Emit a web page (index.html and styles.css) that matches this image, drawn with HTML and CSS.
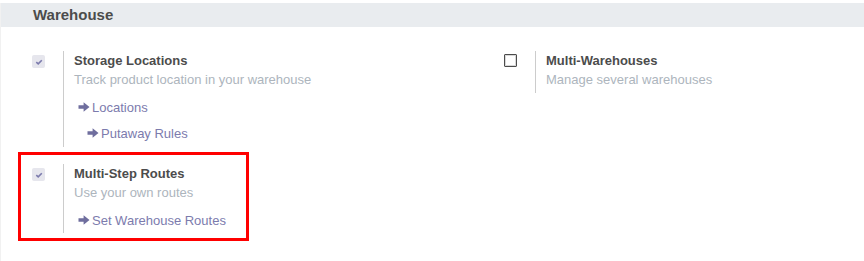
FILE: index.html
```html
<!DOCTYPE html>
<html lang="en">
<head>
    <meta charset="UTF-8">
    <meta name="viewport" content="width=device-width, initial-scale=1.0">
    <title>Inventory Settings</title>
    <link rel="stylesheet" href="styles.css">
</head>
<body>
    <div class="page">
        <h2 class="section-title">Warehouse</h2>
        <div class="settings-grid">
            <div class="setting-box">
                <div class="left-pane">
                    <span class="check checked">
                        <svg viewBox="0 0 8 8" width="8" height="8"><path d="M1.3 4.2 L3.2 5.9 L6.8 2.2" fill="none" stroke="#7c7bad" stroke-width="1.6"/></svg>
                    </span>
                </div>
                <div class="right-pane">
                    <div class="label">Storage Locations</div>
                    <div class="help">Track product location in your warehouse</div>
                    <a class="link first">
                        <svg class="arrow" viewBox="0 0 12 10" width="12" height="10"><path d="M0.5 3.2 H5.6 V0.2 L11.5 5 L5.6 9.8 V6.8 H0.5 Z"/></svg>Locations
                    </a>
                    <a class="link sub">
                        <svg class="arrow" viewBox="0 0 12 10" width="12" height="10"><path d="M0.5 3.2 H5.6 V0.2 L11.5 5 L5.6 9.8 V6.8 H0.5 Z"/></svg>Putaway Rules
                    </a>
                </div>
            </div>

            <div class="setting-box">
                <div class="left-pane">
                    <span class="check"></span>
                </div>
                <div class="right-pane short">
                    <div class="label">Multi-Warehouses</div>
                    <div class="help">Manage several warehouses</div>
                </div>
            </div>

            <div class="setting-box marked">
                <div class="left-pane">
                    <span class="check checked">
                        <svg viewBox="0 0 8 8" width="8" height="8"><path d="M1.3 4.2 L3.2 5.9 L6.8 2.2" fill="none" stroke="#7c7bad" stroke-width="1.6"/></svg>
                    </span>
                </div>
                <div class="right-pane last">
                    <div class="label">Multi-Step Routes</div>
                    <div class="help">Use your own routes</div>
                    <a class="link first">
                        <svg class="arrow" viewBox="0 0 12 10" width="12" height="10"><path d="M0.5 3.2 H5.6 V0.2 L11.5 5 L5.6 9.8 V6.8 H0.5 Z"/></svg>Set Warehouse Routes
                    </a>
                </div>
                <div class="highlight"></div>
            </div>
        </div>
    </div>
</body>
</html>
```

FILE: styles.css
```css
body {
    margin: 0;
    font-family: "Liberation Sans", Arial, sans-serif;
    font-size: 13px;
    color: #4c4c4c;
    background: white;
}
.page {
    border-left: 1px solid #f1f1f1;
    min-height: 261px;
    box-sizing: border-box;
}
.section-title {
    margin: 3px 0 0;
    height: 24px;
    line-height: 24px;
    padding-left: 32px;
    background-color: #e9ecef;
    font-size: 15px;
    font-weight: bold;
    color: #4c4c4c;
}
.settings-grid {
    display: grid;
    grid-template-columns: 472px 1fr;
    row-gap: 17px;
    padding: 24px 0 0 31px;
}
.setting-box {
    display: flex;
    align-items: flex-start;
}
.marked {
    position: relative;
}
.left-pane {
    width: 31px;
    padding-top: 3px;
}
.check {
    display: flex;
    align-items: center;
    justify-content: center;
    width: 13px;
    height: 13px;
    box-sizing: border-box;
    border: 1px solid #4c4c4c;
    box-shadow: inset 0 0 0 1px #d8d8d8;
    border-radius: 1px;
    background: white;
}
.check.checked {
    border: none;
    box-shadow: none;
    border-radius: 2px;
    background: #e6e6ed;
    margin-top: 1px;
}
.right-pane {
    border-left: 1px solid #cccccc;
    padding: 0 0 1px 10px;
}
.right-pane.short {
    padding-bottom: 4px;
}
.right-pane.last {
    padding-bottom: 0;
}
.label {
    font-weight: bold;
    line-height: 19px;
}
.help {
    color: #adb5bd;
    line-height: 19px;
}
.link {
    display: flex;
    align-items: center;
    height: 26px;
    color: #7c7bad;
    cursor: pointer;
}
.link.first {
    margin-top: 5px;
    padding-left: 4px;
}
.link.sub {
    padding-left: 13px;
}
.arrow {
    fill: #6f6e9e;
    margin-right: 2px;
    margin-top: -1px;
}
.highlight {
    position: absolute;
    left: -14px;
    top: -12px;
    width: 231px;
    height: 89px;
    box-sizing: border-box;
    border: 3px solid #ff0000;
    pointer-events: none;
}
```
